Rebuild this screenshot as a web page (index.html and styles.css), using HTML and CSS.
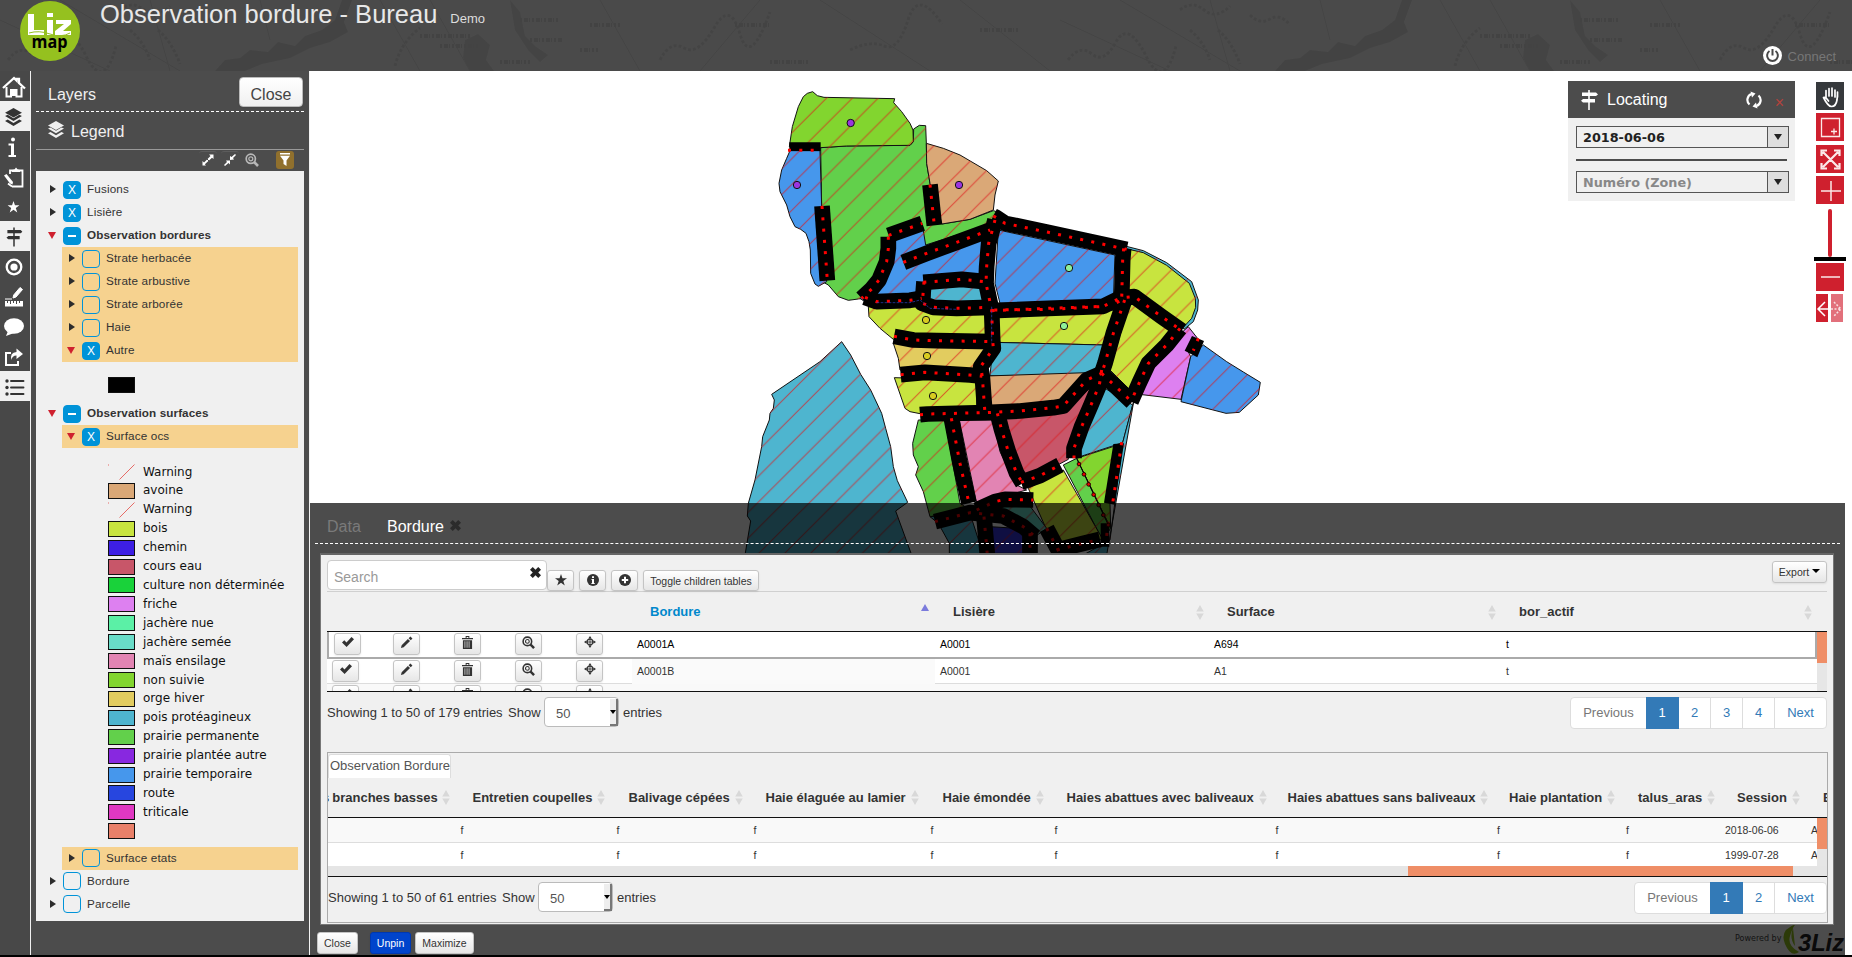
FILE: index.html
```html
<!DOCTYPE html>
<html lang="en">
<head>
<meta charset="utf-8">
<title>Observation bordure - Bureau</title>
<link rel="stylesheet" href="styles.css">
</head>
<body>
<svg class="defs" width="0" height="0">
  <symbol id="layers" viewBox="0 0 18 18"><path d="M9 0 17 4.500 9 9 1 4.500z"/><path d="M1 7.500 3.500 6.500 9 9.700 14.500 6.500 17 7.500 9 12.200zM1 12.300 3.500 11 9 14.200 14.500 11 17 12.300 9 17z"/></symbol>
  <symbol id="sign" viewBox="0 0 18 20"><path d="M8.200 0h1.600v2.500H16L18 4.500 16 6H9.800v3H15v3.500H9.800V20H8.200v-7.500H3L1 10.800 3 9h5.200V6H2V2.500h6.200z"/></symbol>
  <symbol id="check" viewBox="0 0 14 12"><path d="M1 6.500 3.300 4.300 5.500 6.500 10.500 1 13 3.200 5.600 11z"/></symbol>
  <symbol id="pencil" viewBox="0 0 14 14"><path d="M1 13 1.800 10 8.500 3.200 10.800 5.500 4 12.200zM9.300 2.400 11.200.6 13.400 2.800 11.600 4.700z"/></symbol>
  <symbol id="trash" viewBox="0 0 12 14"><path d="M4 0h4v2h4v1.500H0V2h4zM5 1v1h2V1zM1 4.500h10V14H1zM2.800 5.500v7.300h.8V5.500zm2.300 0v7.300h.8V5.500zm2.200 0v7.300h.8V5.500z" fill-rule="evenodd"/></symbol>
  <symbol id="zoomin" viewBox="0 0 14 14"><circle cx="5.800" cy="5.800" r="4.600" fill="none" stroke="currentColor" stroke-width="1.700"/><circle cx="5.800" cy="5.800" r="2" fill="none" stroke="currentColor" stroke-width="1.200"/><path d="m9 9 4 4" stroke="currentColor" stroke-width="2.600"/></symbol>
  <symbol id="target" viewBox="0 0 14 14"><path d="M7 0 9 3H5zM14 7 11 9V5zM7 14 5 11h4zM0 7 3 5v4z"/><circle cx="7" cy="7" r="3.300" fill="none" stroke="currentColor" stroke-width="1.400"/><path d="M7 2v10M2 7h10" stroke="currentColor" stroke-width="1"/></symbol>
  <symbol id="star" viewBox="0 0 14 14"><path d="m7 0 1.700 5H14L9.700 8.200 11.400 13.500 7 10.300 2.600 13.500 4.300 8.200 0 5h5.300z"/></symbol>
  <symbol id="cross" viewBox="0 0 12 12"><path d="M0 3 3 0 6 3 9 0 12 3 9 6 12 9 9 12 6 9 3 12 0 9 3 6z"/></symbol>
  <symbol id="sort" viewBox="0 0 8 16"><path d="M4 0 8 7H0zM4 16 0 9h8z"/></symbol>
</svg>

<header class="top">
  <svg class="relief" width="1852" height="71">
    <defs>
      <pattern id="old-map" width="1060" height="71" patternUnits="userSpaceOnUse">
        <path d="M215 71 225 60 240 58 250 50 268 52 278 42 295 46 305 36 322 30 335 20 342 0H352L344 22 348 32 330 42 310 48 290 58 262 64 245 71z" fill="#434343"/>
        <path d="M465 40 478 34 490 45 486 60 494 71H470L463 58zM510 0 520 12 525 36 535 46 548 55 540 62 528 50 515 30z" fill="#444"/>
        <path d="M0 20 110 71M60 0 180 71M150 0 170 71M260 0 270 40M380 0 420 71M430 0 470 71M600 0 640 71M760 0 700 71M820 0 930 71M960 0 1050 71" stroke="#444" fill="none"/>
        <path d="M8 60q12-16 24-6t24-12 30 14 30-10M130 30q14 12 20 30M158 30q14 12 22 34M120 10q12-10 24 0t26-4M190 15q10 10 20 4t20 6M395 66q6-24 25-38M660 60q10-20 24-12t30-20 26 6 30-22M850 50q20-10 34-4t24-26 34 4" stroke="#444" stroke-width="3" fill="none" stroke-dasharray="3 2"/>
        <path d="M420 36h50M440 46h40M520 20h38M530 40h32M590 25h30M580 50h18M770 62h40M980 30h40M500 62h30M735 25h34" stroke="#434343" stroke-width="4" stroke-dasharray="2 2 4 1 1 2"/>
      </pattern>
    </defs>
    <rect width="1852" height="71" fill="url(#old-map)"/>
  </svg>
  <svg class="logo" viewBox="0 0 60 60">
    <circle cx="30" cy="30" r="30" fill="#95c11f"/>
    <path d="M8 13h6v16h10v5H8zM27 19h6v15h-6zM27 12h6v4h-6zM36 19h15v4l-8 7h8v4H35v-4l9-7h-8z" fill="#fff"/>
    <path d="M9 32q10-3 21 1t20-1" stroke="#95c11f" fill="none"/>
    <text x="11.500" y="47" textLength="36" lengthAdjust="spacingAndGlyphs" class="logo-map">map</text>
  </svg>
  <h1>Observation bordure - Bureau</h1><span class="demo">Demo</span>
  <div class="connect">
    <svg width="19" height="19" viewBox="0 0 19 19"><circle cx="9.500" cy="9.500" r="9.500" fill="#fff"/><path d="M6.500 5a5.400 5.400 0 1 0 6 0M9.500 3v6.500" stroke="#484848" stroke-width="2" fill="none"/></svg>
    <span>Connect</span>
  </div>
</header>

<main class="main">
  <nav class="menu">
    <a><svg viewBox="0 0 30 30"><path d="M4 17 15 7 17.500 9.500V8H20v4L26 17.500" stroke="#fff" stroke-width="2.300" fill="none"/><path d="M7.500 16v9.500h4.500V19h5.500v6.500h5V16" stroke="#fff" stroke-width="2" fill="none"/><path d="M12.500 19h4.500v6h-4.500z"/></svg></a>
    <a class="on"><svg viewBox="0 0 30 30"><use href="#layers" x="5" y="7" width="19" height="19"/></svg></a>
    <a><svg viewBox="0 0 30 30"><path d="M9.500 12.500h5.500V24h2v2H9.500v-2h2.500v-9.500H9.500z"/><circle cx="14" cy="8.500" r="2"/></svg></a>
    <a><svg viewBox="0 0 30 30"><path d="M11 13V9.500h12.500V25.500H13M9 22.500 13 25.500" stroke="#fff" stroke-width="1.800" fill="none"/><path d="M13 11V9l2.500-.5L17 6.500l1.700 2 2.300.5v2zM5 14.500 7.500 13 14 21 13.500 23.500 11 22.500z"/></svg></a>
    <a><svg viewBox="0 0 30 30"><use href="#star" x="8.500" y="10" width="12" height="12"/></svg></a>
    <a class="on"><svg viewBox="0 0 30 30"><use href="#sign" x="6.500" y="6" width="17" height="20"/></svg></a>
    <a><svg viewBox="0 0 30 30"><circle cx="15" cy="16" r="7.300" fill="none" stroke="#fff" stroke-width="2.300"/><circle cx="15" cy="16" r="3.600"/></svg></a>
    <a><svg viewBox="0 0 30 30"><path d="M6 18h7M14 17l.7-3L21 6.500 23.500 8.500 17 16z" stroke="#fff" stroke-width="1"/><path d="M6 20h18v5.500H6z"/><path d="M8.500 20v2M11.500 20v3M14.500 20v2M17.500 20v3M20.500 20v2" stroke="#484848"/></svg></a>
    <a><svg viewBox="0 0 30 30"><ellipse cx="15" cy="15" rx="10" ry="7.800"/><path d="M9 20 7 25 15 22z"/></svg></a>
    <a><svg viewBox="0 0 30 30"><path d="M12 12H7v12h12v-4" fill="none" stroke="#fff" stroke-width="2"/><path d="M17.500 7.500 24 13 17.500 18v-3.500Q13 14.500 12.500 19 10.500 11.500 17.500 11z"/></svg></a>
    <a class="on"><svg viewBox="0 0 30 30"><path d="M12 10h12.500M12 16.500h12.500M12 23h12.500" stroke="#333" stroke-width="1.900" stroke-linecap="round"/><circle cx="8" cy="10" r="1.700"/><circle cx="8" cy="16.500" r="1.700"/><circle cx="8" cy="23" r="1.700"/></svg></a>
  </nav>

  <section class="dock">
    <div class="dock-title"><h2>Layers</h2><button class="btn big">Close</button></div>
    <h3 class="legend-title"><svg width="18" height="18"><use href="#layers"/></svg><span>Legend</span></h3>
    <div class="tools">
      <span class="tool"><svg viewBox="0 0 14 14"><path d="M8 1.500h4.500V6L11 4.700 3.800 11.200 5 12.500H1.500V8L3 9.500 9.500 3z"/><path d="M6 6 8 8" stroke="#4c4c4c"/></svg></span>
      <span class="tool"><svg viewBox="0 0 14 14"><path d="M12 1 13 2 10 5 11 6.500 7 7V3L8.500 4zM2 13 1 12 4 9 3 7.500H7V11.500L5.500 10z"/></svg></span>
      <span class="tool plain"><svg viewBox="0 0 14 14"><use href="#zoomin"/></svg></span>
      <span class="tool filter"><svg viewBox="0 0 14 14"><path d="M2 0h10v1.500H2zM2 2.800h10L8.500 7.500V13L5.500 11V7.500z"/></svg></span>
    </div>
    <div class="tree">
      <div class="row"><i class="tri"></i><i class="box full">X</i><span>Fusions</span></div>
      <div class="row"><i class="tri"></i><i class="box full">X</i><span>Lisière</span></div>
      <div class="row bold"><i class="tri open"></i><i class="box part"></i><span>Observation bordures</span></div>
      <div class="row sub"><i class="tri"></i><i class="box"></i><span>Strate herbacée</span></div>
      <div class="row sub"><i class="tri"></i><i class="box"></i><span>Strate arbustive</span></div>
      <div class="row sub"><i class="tri"></i><i class="box"></i><span>Strate arborée</span></div>
      <div class="row sub"><i class="tri"></i><i class="box"></i><span>Haie</span></div>
      <div class="row sub"><i class="tri open"></i><i class="box full">X</i><span>Autre</span></div>
      <div class="single"><i class="sw c-black"></i></div>
      <div class="row bold"><i class="tri open"></i><i class="box part"></i><span>Observation surfaces</span></div>
      <div class="row sub"><i class="tri open"></i><i class="box full">X</i><span>Surface ocs</span></div>
      <ul class="legend">
        <li><svg class="warn" viewBox="0 0 27 16"><path d="M11.500 15.500 26.500.5M0 1h1" stroke="#e66b66" fill="none"/></svg>Warning</li>
        <li><i class="sw c-avoine"></i>avoine</li>
        <li><svg class="warn" viewBox="0 0 27 16"><path d="M11.500 15.500 26.500.5M0 1h1" stroke="#e66b66" fill="none"/></svg>Warning</li>
        <li><i class="sw c-bois"></i>bois</li>
        <li><i class="sw c-chemin"></i>chemin</li>
        <li><i class="sw c-cours"></i>cours eau</li>
        <li><i class="sw c-culture"></i>culture non déterminée</li>
        <li><i class="sw c-friche"></i>friche</li>
        <li><i class="sw c-nue"></i>jachère nue</li>
        <li><i class="sw c-semee"></i>jachère semée</li>
        <li><i class="sw c-mais"></i>maïs ensilage</li>
        <li><i class="sw c-nonsuivie"></i>non suivie</li>
        <li><i class="sw c-orge"></i>orge hiver</li>
        <li><i class="sw c-pois"></i>pois protéagineux</li>
        <li><i class="sw c-perm"></i>prairie permanente</li>
        <li><i class="sw c-plantee"></i>prairie plantée autre</li>
        <li><i class="sw c-temp"></i>prairie temporaire</li>
        <li><i class="sw c-route"></i>route</li>
        <li><i class="sw c-triticale"></i>triticale</li>
        <li><i class="sw c-none"></i></li>
      </ul>
      <div class="row sub"><i class="tri"></i><i class="box"></i><span>Surface etats</span></div>
      <div class="row"><i class="tri"></i><i class="box"></i><span>Bordure</span></div>
      <div class="row"><i class="tri"></i><i class="box"></i><span>Parcelle</span></div>
    </div>
  </section>

  <section class="map">
    <svg class="parcels" width="1542" height="482" viewBox="310 71 1542 482">
      <defs>
        <pattern id="hatch" width="77.500" height="77.500" patternUnits="userSpaceOnUse" patternTransform="translate(34 0)"><path d="M-5 82.500 82.500-5M-5 5 5-5M72.500 82.500 82.500 72.500" stroke="#e0161a" stroke-opacity=".68" stroke-width="3" fill="none"/></pattern>
        <g id="fields">
          <path class="p-pp" d="M272 203 350 198 540 196 550 185 551 147 568 136 587 137 589 190 590 250 600 310 636 432 720 418 790 392 800 395 780 450 587 500 480 590 400 655 385 657 355 661 325 650 295 615 268 600 275 380z"/>
          <path class="p-ns" d="M178 200 187 140 205 80 220 50 232 40 248 35 262 47 282 52 494 56 491 68 515 95 540 130 549 150 550 185 540 196 350 198 272 203z"/>
          <path class="p-pt" d="M180 212 270 212 275 380 290 605 265 619 255 612 242 580 241 510 237 485 228 460 212 448 195 440 180 410 170 375 150 335 147 310 155 270 170 235z"/>
          <path class="p-av" d="M589 190 640 205 690 225 770 272 805 303 795 345 790 390 720 418 636 432 600 310 590 250z"/>
          <path class="p-pt" d="M490 480 578 440 587 495 775 435 780 690 440 690 390 655 440 630z"/>
          <path class="p-po" d="M600 625 750 612 765 670 600 665z"/>
          <path class="p-pt" d="M805 450 1155 525 1150 660 810 670 795 610z"/>
          <path class="p-po" d="M1185 498 1240 512 1310 548 1385 605 1405 660 1403 690 1390 725 1362 748 1352 735 1385 700 1395 660 1375 612 1300 558 1240 520 1185 506z"/>
          <path class="p-bo" d="M1180 504 1240 518 1310 556 1378 610 1396 655 1397 682 1385 715 1360 742 1210 640 1180 630z"/>
          <path class="p-bo" d="M1200 660 1335 752 1265 820 1215 910 1200 930 1140 870 1160 800z"/>
          <path class="p-bo" d="M800 710 1160 690 1120 795 800 787z"/>
          <path class="p-po" d="M790 787 1120 795 1095 885 780 887z"/>
          <path class="p-av" d="M770 888 1070 878 1000 978 770 998z"/>
          <path class="p-fr" d="M1375 740 1405 778 1370 805 1382 830 1353 958 1220 942 1240 890 1280 825z"/>
          <path class="p-pt" d="M1420 795 1490 845 1540 876 1591 907 1585 945 1528 997 1488 1000 1353 965 1382 830z"/>
          <path class="p-ce" d="M825 1015 1000 995 1085 920 1040 1030 1015 1105 1015 1138 880 1210 850 1130z"/>
          <path class="p-po" d="M1125 925 1208 975 1178 1088 1050 1130 1040 1080z"/>
          <path class="p-ns" d="M1040 1135 1155 1098 1140 1270 1142 1345z"/>
          <path class="p-pp" d="M1000 1155 1040 1135 1142 1345 1118 1380z"/>
          <path class="p-bo" d="M895 1225 1000 1170 1118 1378 1010 1400 950 1350z"/>
          <path class="p-ma" d="M688 1020 790 1020 810 1115 860 1215 890 1230 740 1270z"/>
          <path class="p-pp" d="M565 1020 645 1020 690 1270 720 1290 600 1310 580 1235 557 1185 565 1160 550 1125 548 1090z"/>
          <path class="p-bo" d="M415 680 780 680 780 775 490 778 450 745 417 710z"/>
          <path class="p-or" d="M490 790 770 800 740 870 510 870 505 835z"/>
          <path class="p-bo" d="M493 893 740 900 740 990 570 1001 540 995 525 985z"/>
          <path class="p-po" d="M335 785 362 825 392 883 422 930 455 1000 467 1045 482 1100 490 1160 502 1202 533 1267 497 1293 545 1425 45 1425 62 1323 52 1308 55 1270 75 1200 95 1100 98 1070 118 1020 120 1000 130 985 133 960 125 943 270 845z"/>
          <path class="p-po" d="M600 1310 720 1300 760 1425 658 1425 658 1390 625 1330z"/>
          <path class="p-se" d="M760 1270 890 1265 950 1345 915 1370 770 1310z"/>
          <path class="p-ch" d="M780 1340 860 1345 880 1370 880 1420 780 1420z"/>
          <path class="p-po" d="M1178 1088 1208 975 1212 960 1130 1425 1060 1425 1140 1380z"/>
        </g>
        <mask id="land" class="land" maskUnits="userSpaceOnUse" x="0" y="0" width="1700" height="1430"><use href="#fields"/></mask>
        <g id="roads">
          <path d="M276 378 292 602"/><path d="M600 314 613 436"/><path d="M476 466 577 430"/>
          <path d="M475 470 475 505 470 545 447 600 425 627 395 655"/>
          <path d="M520 547 590 520 680 487 780 450"/>
          <path d="M405 652 440 665 540 661 575 655"/>
          <path d="M580 607 695 598 765 605"/><path d="M582 605 577 670 610 682 680 685 780 682"/>
          <path d="M795 420 790 440 776 490 770 560 768 610 785 690 788 780 790 805 752 860 757 890 762 960 765 1000"/>
          <path d="M790 408 798 412 825 430 955 457 1190 508"/><path d="M1181 505 1178 540 1175 660"/>
          <path d="M785 692 955 685 1120 679 1175 652"/>
          <path d="M1160 668 1190 652 1213 650 1295 710 1355 752"/><path d="M1350 745 1310 795 1255 850 1227 910 1203 965"/>
          <path d="M1184 660 1150 760 1125 850 1115 880"/><path d="M1115 880 1150 913 1206 966"/>
          <path d="M1115 870 1108 915 1083 975 1055 1040 1032 1105 1032 1135"/>
          <path d="M570 1004 593 1002 765 998 870 993 970 983 1000 978 1070 900 1115 880"/>
          <path d="M492 769 550 780 620 782 788 785"/><path d="M512 884 585 877 720 885 757 889"/>
          <path d="M664 1015 690 1150 717 1270"/>
          <path d="M802 1000 815 1050 835 1115 860 1180 878 1210"/><path d="M873 1207 930 1187 990 1155"/>
          <path d="M740 1290 795 1265 825 1258 910 1260"/><path d="M615 1325 720 1298 820 1308 880 1340 915 1370"/>
          <path d="M762 1310 772 1425"/><path d="M950 1345 990 1420"/><path d="M900 1360 900 1420"/><path d="M980 1410 1060 1390 1110 1378"/>
        </g>
      </defs>
      <g transform="translate(730 80) scale(.33333)">
        <use href="#fields" class="fields"/>
        <rect class="hatching" width="1700" height="1430" fill="url(#hatch)" mask="url(#land)"/>
        <use href="#roads" class="road"/>
        <g class="black"><path d="M178 187h94v26h-94zM1386 768 1422 783 1402 832 1364 812zM1150 1092 1182 1090 1154 1274 1122 1268zM1112 1330h26v70h-26z"/></g>
        <use href="#roads" class="dots"/>
        <g class="dots"><path d="M174 211H255"/><path d="M1405 775 1390 812"/><path d="M1175 1087 1160 1190 1148 1270"/><path d="M793 690 960 688 1110 680"/><path d="M1135 1325 1128 1385"/></g>
        <path d="M1040 1135 1135 1335" stroke="#000" stroke-width="3" fill="none"/>
        <g fill="#e00" stroke="#200" stroke-width="3"><circle cx="1047" cy="1152" r="5.500"/><circle cx="1062" cy="1183" r="5.500"/><circle cx="1076" cy="1213" r="5.500"/><circle cx="1091" cy="1244" r="5.500"/><circle cx="1106" cy="1275" r="5.500"/><circle cx="1120" cy="1305" r="5.500"/><circle cx="1135" cy="1335" r="5.500"/></g>
        <path d="M785 680V790M440 668H540L570 660 600 685 680 688" stroke="#2d43c8" stroke-width="2" stroke-dasharray="8 4" fill="none"/>
        <g stroke="#111" stroke-width="3">
          <g fill="#9b35e0"><circle cx="362" cy="129" r="11"/><circle cx="201" cy="315" r="11"/><circle cx="687" cy="315" r="11"/></g>
          <g fill="#90f09a"><circle cx="1017" cy="564" r="11"/><circle cx="1002" cy="738" r="11"/></g>
          <g fill="#d8cc20"><circle cx="588" cy="720" r="11"/><circle cx="591" cy="828" r="11"/><circle cx="609" cy="948" r="11"/></g>
        </g>
      </g>
    </svg>

    <aside class="locate">
      <div class="locate-head"><svg width="18" height="20"><use href="#sign"/></svg><span>Locating</span>
        <svg class="sync" width="16" height="18" viewBox="0 0 16 18"><path d="M3.500 13.500A6.200 6.200 0 0 1 5.500 3M12.500 4.500A6.200 6.200 0 0 1 10.500 15" fill="none" stroke="#fff" stroke-width="2.200"/><path d="M4.500.5 9.500 2.500 6 6.500zM11.500 17.500 6.500 15.500 10 11.500z"/></svg>
        <b class="x">×</b></div>
      <div class="combo"><span>2018-06-06</span><i></i></div>
      <hr>
      <div class="combo muted"><span>Numéro (Zone)</span><i></i></div>
    </aside>

    <div class="navbar">
      <a class="dark"><svg viewBox="0 0 28 28"><path d="M10 16V8.500M13 14V6.500M16 14V6M19 15V8M21.500 12.500 21 18Q20 24.500 15.500 24.500 12 24.500 7.500 15.500 9.500 14.500 12.500 19M21.500 10v5" stroke="#fff" stroke-width="1.700" fill="none" stroke-linecap="round" stroke-linejoin="round"/></svg></a>
      <a><svg viewBox="0 0 28 28"><path d="M5.500 5.500h18v18h-18zM18 15.500v6M15 18.500h6" stroke="#fbe9e9" stroke-width="1.300" fill="none"/></svg></a>
      <a class="n3"><svg viewBox="0 0 28 28"><path d="M7 7 22 22M22 7 7 22M5.500 11V5.500H11M18 5.500h5.500V11M23.500 18v5.500H18M11 23.500H5.500V18" stroke="#fbe9e9" stroke-width="2.200" fill="none"/></svg></a>
      <a><svg viewBox="0 0 28 28"><path d="M5 15h20M15 5v20" stroke="#fbe9e9" stroke-width="1.500"/></svg></a>
      <div class="slider"><i></i></div>
      <a class="n5"><svg viewBox="0 0 28 28"><path d="M5 14h19" stroke="#fbe9e9" stroke-width="1.500"/></svg></a>
      <div class="history"><svg width="28" height="28"><path d="M0 0h12v28H0z" fill="#cf202e"/><path d="M15 0h12v28H15z" fill="#e2707b"/><path d="M9 8 2 15 9 22M2 15h10" stroke="#fff" stroke-width="1.500" fill="none"/><path d="M15 15h10M18 8l7 7-7 7" stroke="#f8dfe1" stroke-width="1.500" stroke-dasharray="2 1.500" fill="none"/></svg></div>
    </div>

    <div class="attribution"><span>Powered by</span><svg width="66" height="34" viewBox="0 0 66 34"><path d="M15 2Q-2 8 4 22T18 30Q6 24 9 14T15 2M12 6q-4 10 2 18" fill="#95c11f"/><text x="17" y="29" textLength="46" lengthAdjust="spacingAndGlyphs">3Liz</text></svg></div>

    <section class="bottom">
      <div class="tabs"><span class="off">Data</span><span>Bordure</span><svg width="11" height="11"><use href="#cross"/></svg></div>
      <div class="panel">
        <div class="bar">
          <div class="search"><span>Search</span><svg width="11" height="11"><use href="#cross"/></svg></div>
          <button class="btn ico"><svg width="12" height="12"><use href="#star"/></svg></button>
          <button class="btn ico"><svg width="12" height="12" viewBox="0 0 12 12"><circle cx="6" cy="6" r="6"/><path d="M4.500 5H7v4h.7v1H4.400V9H5V6h-.5zM5 2.200h2v1.800H5z" fill="#fff"/></svg></button>
          <button class="btn ico"><svg width="12" height="12" viewBox="0 0 12 12"><circle cx="6" cy="6" r="6"/><path d="M5 2.800h2V5h2.200v2H7v2.200H5V7H2.800V5H5z" fill="#fff"/></svg></button>
          <button class="btn toggle">Toggle children tables</button>
          <button class="btn export">Export <i class="caret"></i></button>
        </div>
        <div class="thead">
          <span></span>
          <span class="sorted">Bordure<i class="asc"></i></span>
          <span>Lisière<svg><use href="#sort"/></svg></span>
          <span>Surface<svg><use href="#sort"/></svg></span>
          <span>bor_actif<svg><use href="#sort"/></svg></span>
        </div>
        <div class="tbody">
          <div class="rows">
            <div class="tr sel"><div class="acts"><button class="btn ico"><svg width="14" height="12"><use href="#check"/></svg></button><button class="btn ico"><svg width="13" height="13"><use href="#pencil"/></svg></button><button class="btn ico"><svg width="11" height="13"><use href="#trash"/></svg></button><button class="btn ico"><svg width="13" height="13"><use href="#zoomin"/></svg></button><button class="btn ico"><svg width="12" height="12"><use href="#target"/></svg></button></div><span>A0001A</span><span>A0001</span><span>A694</span><span>t</span></div>
            <div class="tr"><div class="acts"><button class="btn ico"><svg width="14" height="12"><use href="#check"/></svg></button><button class="btn ico"><svg width="13" height="13"><use href="#pencil"/></svg></button><button class="btn ico"><svg width="11" height="13"><use href="#trash"/></svg></button><button class="btn ico"><svg width="13" height="13"><use href="#zoomin"/></svg></button><button class="btn ico"><svg width="12" height="12"><use href="#target"/></svg></button></div><span class="tint">A0001B</span><span>A0001</span><span>A1</span><span>t</span></div>
            <div class="tr alt"><div class="acts"><button class="btn ico"><svg width="14" height="12"><use href="#check"/></svg></button><button class="btn ico"><svg width="13" height="13"><use href="#pencil"/></svg></button><button class="btn ico"><svg width="11" height="13"><use href="#trash"/></svg></button><button class="btn ico"><svg width="13" height="13"><use href="#zoomin"/></svg></button><button class="btn ico"><svg width="12" height="12"><use href="#target"/></svg></button></div><span></span><span></span><span></span><span></span></div>
          </div>
          <div class="vscroll"><i></i></div>
        </div>
        <div class="foot">
          <span class="info">Showing 1 to 50 of 179 entries</span><span class="show">Show</span><div class="select"><span>50</span><i></i></div><span>entries</span>
          <div class="pages"><a class="dis">Previous</a><a class="cur">1</a><a>2</a><a>3</a><a>4</a><a class="next">Next</a></div>
        </div>

        <div class="child">
          <div class="child-tab">Observation Bordure</div>
          <div class="crow chead">
            <span class="first"><b>s</b> branches basses<svg><use href="#sort"/></svg></span>
            <span>Entretien coupelles<svg><use href="#sort"/></svg></span><span>Balivage cépées<svg><use href="#sort"/></svg></span><span>Haie élaguée au lamier<svg><use href="#sort"/></svg></span><span>Haie émondée<svg><use href="#sort"/></svg></span><span>Haies abattues avec baliveaux<svg><use href="#sort"/></svg></span><span>Haies abattues sans baliveaux<svg><use href="#sort"/></svg></span><span>Haie plantation<svg><use href="#sort"/></svg></span><span>talus_aras<svg><use href="#sort"/></svg></span><span>Session<svg><use href="#sort"/></svg></span><span class="cut">E</span>
          </div>
          <div class="cbody">
            <div class="cscroll">
              <div class="crow odd"><span></span><span>f</span><span>f</span><span>f</span><span>f</span><span>f</span><span>f</span><span>f</span><span>f</span><span>2018-06-06</span><span>A</span></div>
              <div class="crow"><span></span><span>f</span><span>f</span><span>f</span><span>f</span><span>f</span><span>f</span><span>f</span><span>f</span><span>1999-07-28</span><span>A</span></div>
            </div>
            <div class="vscroll"><i></i></div>
          </div>
          <div class="hscroll"><i></i></div>
          <div class="foot">
            <span class="info">Showing 1 to 50 of 61 entries</span><span class="show">Show</span><div class="select"><span>50</span><i></i></div><span>entries</span>
            <div class="pages"><a class="dis">Previous</a><a class="cur">1</a><a>2</a><a class="next">Next</a></div>
          </div>
        </div>
      </div>
      <div class="actions"><button class="btn">Close</button><button class="btn blue">Unpin</button><button class="btn">Maximize</button></div>
    </section>
  </section>
</main>
<div class="floor"></div>
</body>
</html>
```
FILE: styles.css
```css
* { box-sizing: border-box; }
body { margin: 0; width: 1852px; height: 957px; overflow: hidden; background: #fff; font: 13px/20px "Liberation Sans", Arial, sans-serif; color: #333; display: flex; flex-direction: column; }
h1, h2, h3, ul { margin: 0; padding: 0; font-weight: normal; }
svg { fill: currentColor; flex: none; }
.defs { position: absolute; }
button { font-family: inherit; padding: 0; cursor: pointer; }

.top { height: 71px; background: #4a4a4a; display: flex; align-items: flex-start; position: relative; padding-left: 20px; flex: none; }
.relief { position: absolute; left: 0; top: 0; }
.logo { width: 60px; height: 60px; margin: 1px 20px 0 0; position: relative; }
.logo-map { font: bold 17px "Open Sans", sans-serif; fill: #000; }
.top h1 { position: relative; font-size: 25.5px; line-height: 28px; color: #e8e8e8; white-space: nowrap; }
.demo { position: relative; font-size: 13px; line-height: 37px; color: #ddd; margin-left: 13px; }
.connect { position: relative; display: flex; gap: 6px; margin: 46px 16px 0 auto; color: #777; font-size: 13px; line-height: 21px; }

.main { display: flex; height: 884px; }
.floor { height: 2px; background: #000; }
.menu { width: 31px; background: #484848; border-right: 1px solid #f0f0f0; display: flex; flex-direction: column; color: #fff; }
.menu a { height: 30px; width: 30px; display: block; }
.menu a svg { width: 30px; height: 30px; display: block; margin-left: -1px; }
.menu .on { background: #f0f0f0; color: #333; }

.dock { width: 279px; background: #4c4c4c; border-right: 1px solid #f4f4f4; padding: 0 5px; color: #f0f0f0; }
.dock-title { height: 41px; border-bottom: 1px dashed #fff; display: flex; justify-content: space-between; padding: 6px 1px 0 12px; }
.dock-title h2 { font-size: 16px; line-height: 36px; }
.legend-title { height: 38px; display: flex; gap: 6px; padding: 9px 0 0 11px; font-size: 16px; line-height: 22px; border-bottom: 1px solid #999; }
.tools { height: 21px; display: flex; padding: 1px 0 0 163px; color: #fff; }
.tool { width: 18px; height: 18px; margin-right: 4px; border-top: 1px solid #5c5c5c; border-radius: 3px; display: flex; justify-content: center; padding-top: 1px; }
.tool svg { width: 14px; height: 14px; }
.tool.plain { color: #b8b8b8; border: 0; padding-top: 2px; }
.tool.filter { background: #90702d; border: 0; margin-left: 11px; padding-top: 2px; }

.btn { border: 1px solid #c4c4c4; border-radius: 3px; background: linear-gradient(#fff, #e6e6e6); color: #333; font-size: 10.5px; line-height: 20px; height: 22px; box-shadow: 0 1px 2px rgba(0,0,0,.08); flex: none; }
.btn.big { width: 64px; height: 30px; font-size: 16px; line-height: 30px; border-color: #bbb; border-radius: 4px; background: linear-gradient(#fff, #f0f0f0); color: #444; padding-top: 2px; }
.btn.ico { width: 27px; display: flex; justify-content: center; align-items: flex-start; padding-top: 3px; }

.tree { height: 750px; background: #f0f0f0; padding: 7px 6px 0 8px; color: #333; font-size: 11.7px; letter-spacing: .15px; }
.row { height: 23px; display: flex; align-items: center; padding-left: 5px; line-height: 20px; }
.row.sub { background: #f6d28f; margin-left: 18px; padding-left: 6px; }
.row.bold { font-weight: bold; letter-spacing: .1px; }
.row span { padding: 0 0 1px 6px; }
.tri { width: 14px; height: 9px; flex: none; }
.tri::before { content: ""; display: block; width: 0; margin-left: 1px; border-left: 6.500px solid #2c2c2c; border-top: 4.500px solid transparent; border-bottom: 4.500px solid transparent; }
.tri.open::before { margin: 1px 0 0 -1px; border: 4px solid transparent; border-top: 7px solid #cf202e; border-bottom: 0; }
.box { width: 18px; height: 18px; flex: none; border: 1px solid #0093d8; border-radius: 4px; font: normal 12px/17px "Liberation Sans", sans-serif; text-align: center; color: #fff; display: block; }
.box.full, .box.part { background: #0093d8; }
.box.part::before { content: ""; display: block; width: 8px; height: 2px; margin: 7px auto 0; background: #fff; }
.single { height: 40px; padding: 15px 0 0 64px; }
.sw { display: block; width: 27px; height: 16px; border: 1px solid #111; flex: none; }
.legend { list-style: none; padding: 14.600px 0 6.200px 64px; font: 12px/19px "DejaVu Sans", sans-serif; letter-spacing: 0; color: #111; }
.legend li { height: 18.910px; display: flex; gap: 8px; align-items: center; white-space: nowrap; }
.warn { width: 27px; height: 16px; }
.c-black { background: #000; } .c-avoine { background: #daa877; } .c-bois { background: #c8e43f; }
.c-chemin { background: #3d1fe4; } .c-cours { background: #c85669; } .c-culture { background: #19d23a; }
.c-friche { background: #dd80f0; } .c-nue { background: #5bf0a6; } .c-semee { background: #69dcc8; }
.c-mais { background: #e284b3; } .c-nonsuivie { background: #82d52f; } .c-orge { background: #e2cc5f; }
.c-pois { background: #4eb5cf; } .c-perm { background: #62d04b; } .c-plantee { background: #8828e0; }
.c-temp { background: #4697ec; } .c-route { background: #2746df; } .c-triticale { background: #e038c2; }
.c-none { background: #e98069; }

.map { flex: 1; position: relative; background: #fff; overflow: hidden; }
.parcels { position: absolute; left: 0; top: 0; }
.fields { stroke: #111; stroke-width: 3; }
.land { mask-type: alpha; }
.p-ns { fill: #82d52f; } .p-pp { fill: #62d04b; } .p-pt { fill: #4697ec; } .p-av { fill: #daa877; }
.p-po { fill: #4eb5cf; } .p-bo { fill: #c8e43f; } .p-fr { fill: #dd80f0; } .p-ce { fill: #c85669; }
.p-ma { fill: #e284b3; } .p-or { fill: #e2cc5f; } .p-se { fill: #69dcc8; } .p-ch { fill: #3333dd; }
.road { fill: none; stroke: #000; stroke-width: 47; stroke-linecap: butt; stroke-linejoin: round; }
.black { fill: #000; }
.dots { fill: none; stroke: #f00; stroke-width: 9; stroke-dasharray: 9 25; }

.locate { position: absolute; left: 1258px; top: 10px; width: 227px; height: 120px; background: #f0f0f0; }
.locate-head { height: 37px; background: #4c4c4c; color: #fff; font-size: 16px; line-height: 38px; padding: 1px 11px 0 12px; display: flex; align-items: center; gap: 9px; }
.sync { margin-left: auto; }
.x { color: #b4423c; font: 16px/20px "Liberation Sans", sans-serif; margin: 6px 0 0 4px; }
.combo { margin: 8px 6px 0 8px; height: 22px; border: 1px solid #555; display: flex; font: bold 12.800px/21px "DejaVu Sans", sans-serif; color: #222; }
.combo span { flex: 1; padding-left: 6px; }
.combo i { width: 21px; border-left: 1px solid #555; background: #dedede; display: flex; align-items: center; justify-content: center; }
.combo i::before { content: ""; border: 4px solid transparent; border-top: 6px solid #222; border-bottom: 0; }
.muted { color: #888; margin-top: 0; }
.locate hr { border: 0; height: 2px; background: #4c4c4c; margin: 11px 8px 10px; }

.navbar { position: absolute; left: 1504px; top: 11px; width: 32px; padding-left: 2px; color: #fff; }
.navbar a { display: block; width: 28px; height: 28px; background: #cf202e; margin-bottom: 3px; }
.navbar a.dark { background: #36393c; }
.navbar a.n3 { margin-top: 4px; }
.slider { width: 32px; height: 55px; margin: -1px 0 0 -2px; padding-top: 3px; border-bottom: 4px solid #000; }
.slider i { display: block; width: 4px; height: 48px; margin: 0 auto; background: #cf202e; border-radius: 2px; }
.navbar a.n5 { margin-top: 2px; }
.navbar svg { display: block; }

.attribution { position: absolute; left: 1425px; top: 851px; display: flex; align-items: center; font: 8px/20px "DejaVu Sans", sans-serif; color: #444; }
.attribution span { width: 46px; white-space: nowrap; }
.attribution text { font: italic bold 24px "Liberation Sans", sans-serif; fill: #222; }

.bottom { position: absolute; left: 0; top: 432px; width: 1535px; height: 452px; background: rgba(0,0,0,.7); padding: 0 5px 0 5px; }
.tabs { height: 41px; border-bottom: 1px dashed #fff; color: #fff; font-size: 16px; line-height: 47px; display: flex; padding-left: 12px; }
.tabs .off { color: #7a7a7a; width: 60px; }
.tabs svg { margin: 17px 0 0 6px; color: #2b2b2b; }
.panel { margin: 9px 6px 0 5px; height: 372px; background: #f0f0f0; border: 1px solid #777; border-top: 2px solid #666; padding: 6px 6px 0; }
.bar { height: 31px; border-bottom: 1px solid #d0d0d0; display: flex; align-items: flex-start; }
.search { width: 220px; height: 30px; margin-top: -1px; background: #fff; border: 1px solid #ccc; border-radius: 4px; display: flex; justify-content: space-between; padding: 0 5px 0 6px; font-size: 14px; line-height: 32px; color: #999; }
.search svg { color: #222; margin-top: 6px; }
.bar .ico { margin: 9px 5px 0 0; height: 21px; }
.search + .ico { margin-left: 0; }
.toggle { width: 116px; margin-top: 9px; height: 21px; }
.export { margin-left: auto; width: 55px; margin-top: 0; }
.caret { display: inline-block; border: 4px solid transparent; border-top-color: #000; border-bottom: 0; vertical-align: 3px; }
.thead { display: grid; grid-template-columns: 310px 303px 274px 292px 1fr; height: 39px; font-weight: bold; font-size: 13px; line-height: 40px; margin-right: 10px; }
.thead span { padding: 0 10px 0 13px; display: flex; justify-content: space-between; }
.thead span:last-child { padding-right: 5px; }
.thead svg, .chead svg { width: 8px; height: 15px; color: #d8d8d8; }
.thead svg { margin-top: 13px; }
.sorted { color: #08c; }
.asc { border: 4px solid transparent; border-bottom: 7px solid #7b7bdc; border-top: 0; height: 0; margin: 12px 1px 0 0; }
.tbody { display: flex; height: 61px; border-top: 1px solid #111; border-bottom: 1px solid #111; overflow: hidden; }
.rows { flex: 1; font-size: 10.500px; }
.tr { display: grid; grid-template-columns: 305px 303px 274px 292px 1fr; height: 25px; background: #fff; border-bottom: 1px solid #ddd; line-height: 25px; }
.tr > span { padding-left: 5px; }
.tr.sel { height: 27px; border: 2px solid #aaa; border-top: 0; color: #000; grid-template-columns: 303px 303px 274px 292px 1fr; }
.tr.alt { background: #f9f9f9; }
.tint { background: #fafafa; }
.acts { display: flex; padding: 1px 0 0 5px; min-width: 0; }
.acts .ico { margin-right: 34px; padding-top: 2px; }
.sel .acts .ico:first-child { margin-right: 32px; }
.vscroll { width: 10px; background: #e6e6e6; }
.vscroll i { display: block; height: 31px; background: #ef8e67; }
.foot { display: flex; align-items: flex-start; height: 60px; padding-top: 5px; line-height: 32px; white-space: nowrap; }
.info { width: 181px; }
.show { width: 36px; }
.select { width: 75px; height: 30px; background: #fff; border: 1px solid #bbb; border-radius: 4px; display: flex; justify-content: space-between; padding-left: 11px; color: #555; margin-right: 4px; }
.select i { width: 8px; margin-top: 1px; background: #eee; border-right: 2px solid #777; border-bottom: 2px solid #777; }
.select i::before { content: ""; display: block; margin: 11px 0 0; border: 3px solid transparent; border-top: 4px solid #000; border-bottom: 0; }
.pages { margin-left: auto; height: 32px; display: flex; border: 1px solid #ddd; border-radius: 4px; background: #fff; color: #337ab7; line-height: 30px; text-align: center; }
.pages a { width: 32px; border-right: 1px solid #ddd; }
.pages .next { width: 51px; border: 0; }
.pages .dis { width: 75px; color: #777; border: 0; }
.pages .cur { width: 33px; background: #337ab7; color: #fff; margin: -1px 0; line-height: 32px; border-color: #337ab7; }
.child { height: 171px; border: 1px solid #aaa; margin-right: -1px; overflow: hidden; }
.child .info { width: 174px; }
.child-tab { width: 123px; height: 24px; margin-top: 1px; padding-left: 1px; background: #fff; border: 1px solid #ddd; border-bottom: 0; border-radius: 3px 3px 0 0; color: #555; line-height: 22px; white-space: nowrap; }
.crow { display: grid; grid-template-columns: 131.500px 156px 137px 177px 124px 221px 221.500px 129px 99px 86px 100px; width: 1600px; font-size: 10.500px; height: 24px; line-height: 25px; }
.crow span { padding-left: 1px; }
.chead { height: 39px; line-height: 39px; font-size: 13px; font-weight: bold; }
.chead span { padding-left: 13px; display: flex; white-space: nowrap; gap: 5px; }
.chead .first { padding-left: 0; gap: 4px; overflow: hidden; }
.first b { margin-left: -6px; margin-right: -1px; }
.chead svg { margin-top: 12px; }
.cbody { display: flex; border-top: 1px solid #111; height: 49px; }
.cscroll { flex: 1; overflow: hidden; background: #fff; }
.odd { background: #f9f9f9; border-bottom: 1px solid #ddd; height: 25px; }
.hscroll { height: 11px; background: #e5e5e5; border-bottom: 1px solid #111; padding-left: 1080px; }
.hscroll i { display: block; width: 385px; height: 10px; background: #ef8e67; }
.actions { display: flex; padding: 7px 0 0 2px; }
.actions .btn { padding: 0 6px; margin-right: 4px; line-height: 21px; }
.actions .btn.blue { background: #0044cc; border-color: #0038b0; color: #fff; margin-left: 8px; }
```
